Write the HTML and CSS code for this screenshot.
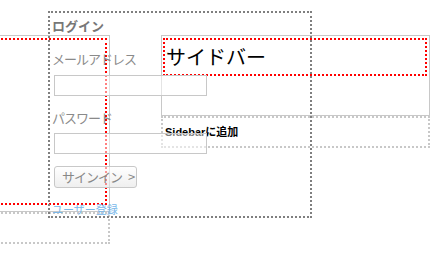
FILE: index.html
```html
<!DOCTYPE html>
<html lang="ja">
<head>
<meta charset="utf-8">
<title>ログイン</title>
<link rel="stylesheet" href="styles.css">
</head>
<body>
<div class="page">
  <div class="col col-left">
    <div class="panel panel-main"><div class="title title-tall"></div></div>
    <div class="widget"></div>
  </div>
  <div class="col col-right">
    <div class="panel panel-side"><h2 class="title">サイドバー</h2></div>
    <div class="widget">Sidebarに追加</div>
  </div>
</div>
<form class="login">
  <h3 class="login-title">ログイン</h3>
  <label class="label label-first">メールアドレス</label>
  <input class="field field-first" type="text">
  <label class="label label-second">パスワード</label>
  <input class="field field-second" type="password">
  <button class="signin" type="button">サインイン &gt;</button>
  <a class="register" href="#">ユーザー登録</a>
</form>
</body>
</html>
```
FILE: styles.css
```css
html, body {
  margin: 0;
  padding: 0;
  background: #fff;
}
body {
  font-family: "Noto Sans CJK JP", "Noto Sans", sans-serif;
  color: #000;
}
.page {
  display: flex;
  gap: 51px;
  margin-left: -30px;
  padding-top: 35px;
}
.col {
  display: flex;
  flex-direction: column;
}
.col-left { width: 140px; }
.col-right { width: 269px; }
.panel {
  box-sizing: border-box;
  border: 1px solid #c8c8c8;
  padding: 2px 2px 6px 1px;
}
.panel-side { padding-bottom: 39px; }
.title {
  margin: 0;
  border: 2px dotted #f00;
  font-family: "Noto Sans CJK JP", sans-serif;
  font-size: 20px;
  font-weight: normal;
  line-height: 34px;
  padding-left: 1px;
  color: #000;
}
.title-tall {
  box-sizing: border-box;
  height: 167px;
}
.widget {
  box-sizing: border-box;
  height: 32px;
  border: 2px dotted #c8c8c8;
  padding: 6px 2px;
  font-family: "Liberation Sans", "Noto Sans CJK JP", sans-serif;
  font-size: 11px;
  font-weight: bold;
  line-height: 16px;
  color: #000;
}
.login {
  position: absolute;
  left: 48px;
  top: 11px;
  width: 264px;
  height: 207px;
  box-sizing: border-box;
  border: 2px dotted #7f7f7f;
  padding: 5px 2px 0 2px;
  margin: 0;
  display: flex;
  flex-direction: column;
  align-items: flex-start;
}
.login-title {
  margin: 0;
  font-size: 13px;
  font-weight: bold;
  line-height: 16px;
  color: #777;
}
.label {
  font-size: 13px;
  line-height: 16px;
  letter-spacing: -1px;
  color: #8a8a8a;
}
.label-first { margin-top: 17px; }
.label-second { margin-top: 14px; }
.field {
  box-sizing: border-box;
  width: 153px;
  height: 22px;
  margin: 0 0 0 2px;
  padding: 0 3px;
  border: 1px solid #c8c8c8;
  border-radius: 0;
  background: rgba(255, 255, 255, 0.5);
  outline: none;
  font-family: inherit;
  font-size: 12px;
}
.field-first { margin-top: 8px; }
.field-second { margin-top: 7px; }
.signin {
  box-sizing: border-box;
  width: 83px;
  height: 22px;
  margin: 12px 0 0 2px;
  padding: 0 0 0 7px;
  text-align: left;
  font-family: "Noto Sans CJK JP", sans-serif;
  font-size: 13px;
  letter-spacing: -1px;
  word-spacing: 4px;
  line-height: 20px;
  color: #888;
  border: 1px solid #c8c8c8;
  border-radius: 3px;
  background: linear-gradient(rgba(255, 255, 255, 0.6), rgba(228, 228, 228, 0.6));
}
.register {
  margin-top: 14px;
  font-size: 11px;
  line-height: 14px;
  color: #7ab8ea;
  text-decoration: none;
}
```
